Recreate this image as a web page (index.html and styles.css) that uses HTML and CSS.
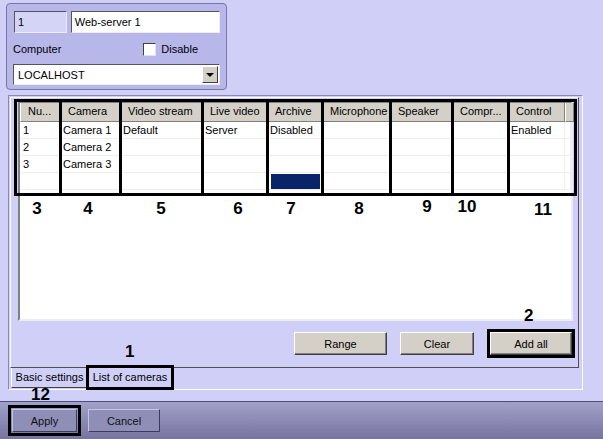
FILE: index.html
```html
<!DOCTYPE html>
<html lang="en">
<head>
  <meta charset="UTF-8">
  <title>Web-server settings</title>
  <link rel="stylesheet" href="styles.css">
</head>
<body>

  <div class="server-panel">
    <div class="server-row">
      <div class="field field-id">1</div>
      <div class="field field-name">Web-server 1</div>
    </div>
    <div class="computer-row">
      <span class="computer-label">Computer</span>
      <label class="check"><span class="check-box"></span>Disable</label>
    </div>
    <div class="combo">
      <span class="combo-text">LOCALHOST</span>
      <span class="combo-btn"><span class="combo-arrow"></span></span>
    </div>
  </div>

  <div class="tab-frame">
    <div class="tab-page">
      <div class="list-view">
        <div class="list-head">
          <div class="head-cell">Nu...</div>
          <div class="head-cell">Camera</div>
          <div class="head-cell">Video stream</div>
          <div class="head-cell">Live video</div>
          <div class="head-cell">Archive</div>
          <div class="head-cell">Microphone</div>
          <div class="head-cell">Speaker</div>
          <div class="head-cell">Compr...</div>
          <div class="head-cell">Control</div>
          <div class="head-cell head-filler"></div>
        </div>
        <div class="list-row">
          <div>1</div><div>Camera 1</div><div>Default</div><div>Server</div><div>Disabled</div>
          <div></div><div></div><div></div><div>Enabled</div><div></div>
        </div>
        <div class="list-row">
          <div>2</div><div>Camera 2</div><div></div><div></div><div></div>
          <div></div><div></div><div></div><div></div><div></div>
        </div>
        <div class="list-row">
          <div>3</div><div>Camera 3</div><div></div><div></div><div></div>
          <div></div><div></div><div></div><div></div><div></div>
        </div>
        <div class="list-row">
          <div></div><div></div><div></div><div></div><div><span class="selected"></span></div>
          <div></div><div></div><div></div><div></div><div></div>
        </div>
        <div class="col-numbers">
          <span>3</span><span>4</span><span>5</span><span>6</span><span>7</span>
          <span>8</span><span>9</span><span>10</span><span>11</span>
        </div>
      </div>

      <div class="list-buttons">
        <button class="btn btn-range">Range</button>
        <button class="btn btn-clear">Clear</button>
        <button class="btn btn-add marked">Add all</button>
      </div>
    </div>

    <div class="tab-strip">
      <div class="tab tab-basic">Basic settings</div>
      <div class="tab tab-active marked">List of cameras</div>
    </div>
  </div>

  <div class="footer-bar">
    <button class="bar-btn bar-apply marked">Apply</button>
    <button class="bar-btn bar-cancel">Cancel</button>
  </div>

  <!-- annotation overlay -->
  <div class="col-marks">
    <div class="col-mark"></div>
    <div class="col-mark"></div>
    <div class="col-mark"></div>
    <div class="col-mark"></div>
    <div class="col-mark"></div>
    <div class="col-mark"></div>
    <div class="col-mark"></div>
    <div class="col-mark"></div>
    <div class="col-mark col-mark-last"></div>
  </div>
  <div class="callout callout-1">1</div>
  <div class="callout callout-2">2</div>
  <div class="callout callout-12">12</div>

</body>
</html>
```

FILE: styles.css
```css
* {
  margin: 0;
  padding: 0;
  box-sizing: border-box;
}

body {
  position: relative;
  width: 603px;
  height: 439px;
  overflow: hidden;
  background-color: #cfcff8;
  font-family: "Liberation Sans", Arial, sans-serif;
  font-size: 11px;
  color: #000;
}

button {
  font-family: inherit;
  font-size: 11px;
  color: #000;
}

/* top panel */

.server-panel {
  width: 221px;
  height: 87px;
  margin: 3px 0 0 6px;
  padding: 7px 6px 0 7px;
  background-color: #b7b7ea;
  border: 1px solid #78789e;
  border-radius: 4px;
}

.server-row {
  display: flex;
  gap: 4px;
}

.field {
  height: 22px;
  line-height: 20px;
  padding: 0 3px;
  background-color: #fff;
  border: 1px solid;
  border-color: #555 #ececfc #ececfc #555;
  white-space: nowrap;
}

.field-id {
  width: 53px;
  background-color: #d4d4f6;
}

.field-name {
  width: 150px;
}

.computer-row {
  display: flex;
  align-items: center;
  height: 20px;
  margin-top: 6px;
}

.computer-label {
  margin-left: -1px;
}

.check {
  display: flex;
  align-items: center;
  margin-left: auto;
  margin-right: 22px;
}

.check-box {
  width: 13px;
  height: 13px;
  margin-right: 5px;
  background-color: #fff;
  border: 1px solid;
  border-color: #404040 #e0e0f0 #e0e0f0 #404040;
}

.combo {
  display: flex;
  align-items: center;
  width: 207px;
  height: 21px;
  margin: 5px 0 0 -1px;
  padding-left: 4px;
  background-color: #fff;
  border: 1px solid;
  border-color: #555 #ececfc #ececfc #555;
}

.combo-btn {
  display: flex;
  align-items: center;
  justify-content: center;
  width: 16px;
  height: 17px;
  margin-left: auto;
  margin-right: 1px;
  background-color: #d4d0c8;
  border: 1px solid;
  border-color: #fff #404040 #404040 #fff;
}

.combo-arrow {
  width: 0;
  height: 0;
  border-left: 4px solid transparent;
  border-right: 4px solid transparent;
  border-top: 4px solid #000;
}

/* tab control */

.tab-frame {
  width: 575px;
  height: 295px;
  margin: 5px 0 0 8px;
  border: 1px solid;
  border-color: #8a8ab0 #fff #fff #8a8ab0;
}

.tab-page {
  width: 569px;
  height: 271px;
  margin: 1px 0 0 1px;
  padding: 3px 6px 0 7px;
  border: 1px solid;
  border-color: #fff #505050 #505050 #fff;
}

.list-view {
  width: 555px;
  height: 220px;
  background-color: #fff;
  border: 2px solid;
  border-color: #808080 #ececf4 #ececf4 #808080;
}

.list-head,
.list-row,
.col-numbers {
  display: grid;
  grid-template-columns: 40px 60px 82px 65px 55px 68px 62px 56px 57px 1fr;
}

.list-head {
  height: 19px;
}

.head-cell {
  padding-left: 7px;
  line-height: 17px;
  background-color: #d4d0c8;
  border-left: 1px solid #fff;
  border-right: 1px solid #808080;
  border-bottom: 1px solid #808080;
  white-space: nowrap;
  overflow: hidden;
}

.list-row {
  height: 17px;
}

.list-row div {
  padding-left: 3px;
  line-height: 16px;
  border-right: 1px solid #eeeeee;
  border-bottom: 1px solid #eeeeee;
  white-space: nowrap;
}

.list-row .selected {
  display: block;
  height: 15px;
  margin: 1px 1px 0 1px;
  background-color: #0a246a;
}

.col-numbers {
  height: 20px;
  margin-top: 9px;
}

.col-numbers span {
  font-size: 17px;
  font-weight: bold;
  line-height: 20px;
  text-align: center;
}

.col-numbers span:nth-child(1) { padding-right: 6px; }
.col-numbers span:nth-child(2) { padding-right: 4px; }
.col-numbers span:nth-child(4) { padding-left: 7px; }
.col-numbers span:nth-child(5) { padding-right: 7px; }
.col-numbers span:nth-child(6) { padding-left: 6px; }
.col-numbers span:nth-child(7) { padding-left: 12px; margin-top: -2px; }
.col-numbers span:nth-child(8) { padding-right: 26px; margin-top: -2px; }
.col-numbers span:nth-child(9) { padding-left: 13px; margin-top: 1px; }

.list-buttons {
  display: flex;
  justify-content: flex-end;
  margin-top: 11px;
}

.btn {
  height: 23px;
  background-color: #d4d0c8;
  border: 1px solid;
  border-color: #fff #404040 #404040 #fff;
  box-shadow: inset -1px -1px 0 #808080;
}

.btn-range {
  width: 93px;
  margin-right: 13px;
}

.btn-clear {
  width: 74px;
  margin-right: 16px;
}

.btn-add {
  width: 82px;
}

.tab-strip {
  display: flex;
  height: 21px;
  margin-left: 2px;
}

.tab {
  height: 20px;
  line-height: 19px;
  text-align: center;
  white-space: nowrap;
  border-left: 1px solid #fff;
  border-right: 1px solid #404040;
  border-bottom: 1px solid #404040;
}

.tab-basic {
  width: 77px;
}

.tab-active {
  width: 84px;
  height: 21px;
  margin-top: -1px;
  line-height: 21px;
  background-color: #cfcff8;
}

/* bottom bar */

.footer-bar {
  display: flex;
  gap: 11px;
  height: 38px;
  margin-top: 11px;
  padding: 7px 0 0 12px;
  background: linear-gradient(#a1a1ca, #77749f);
  border-top: 1px solid #4e4e78;
}

.bar-btn {
  height: 23px;
  color: #111;
  background-color: #8e8eb6;
  border: 1px solid;
  border-color: #c4c4e4 #3c3c5c #3c3c5c #c4c4e4;
}

.bar-apply {
  width: 65px;
}

.bar-cancel {
  width: 72px;
}

/* annotations */

.marked {
  outline: 3px solid #000;
}

.btn-add.marked {
  outline-offset: 0;
}

.tab-active.marked {
  outline-offset: -1px;
}

.bar-apply.marked {
  outline-offset: 1px;
}

.col-marks {
  position: absolute;
  left: 14px;
  top: 99px;
  display: grid;
  grid-template-columns: 45px 60px 82px 65px 55px 68px 62px 56px 1fr;
  width: 563px;
  height: 97px;
  border: 3px solid #000;
}

.col-mark {
  border-right: 3px solid #000;
}

.col-mark-last {
  border-right: none;
}

.callout {
  position: absolute;
  font-size: 17px;
  font-weight: bold;
  line-height: 17px;
}

.callout-1 {
  left: 125px;
  top: 343px;
}

.callout-2 {
  left: 524px;
  top: 307px;
}

.callout-12 {
  left: 31px;
  top: 386px;
}
```
